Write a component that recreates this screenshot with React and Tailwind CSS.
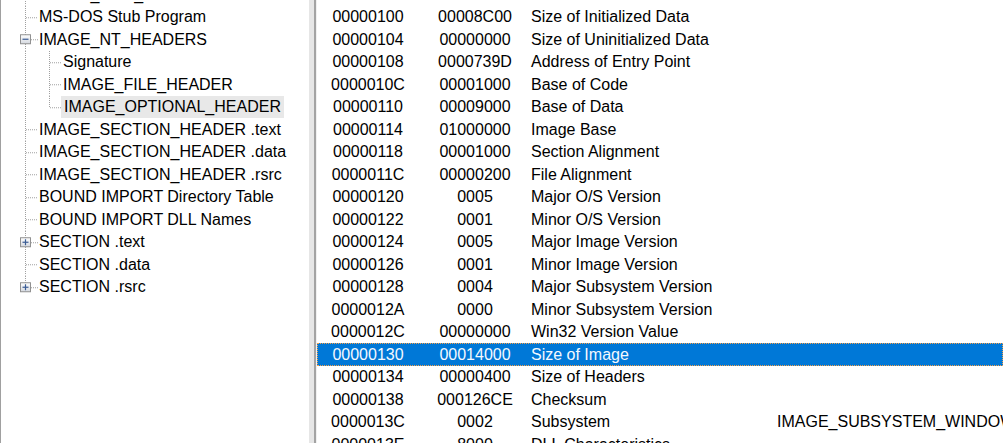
import React from "react";

const FONT = { fontFamily: '"Liberation Sans", Arial, sans-serif' };

const tree = [
  { label: "IMAGE_DOS_HEADER", level: 0 },
  { label: "MS-DOS Stub Program", level: 0 },
  { label: "IMAGE_NT_HEADERS", level: 0, box: "minus" },
  { label: "Signature", level: 1 },
  { label: "IMAGE_FILE_HEADER", level: 1 },
  { label: "IMAGE_OPTIONAL_HEADER", level: 1, selected: true, lastChild: true },
  { label: "IMAGE_SECTION_HEADER .text", level: 0 },
  { label: "IMAGE_SECTION_HEADER .data", level: 0 },
  { label: "IMAGE_SECTION_HEADER .rsrc", level: 0 },
  { label: "BOUND IMPORT Directory Table", level: 0 },
  { label: "BOUND IMPORT DLL Names", level: 0 },
  { label: "SECTION .text", level: 0, box: "plus" },
  { label: "SECTION .data", level: 0 },
  { label: "SECTION .rsrc", level: 0, box: "plus", last: true },
];

const rows = [
  ["000000FC", "00006800", "Size of Code", ""],
  ["00000100", "00008C00", "Size of Initialized Data", ""],
  ["00000104", "00000000", "Size of Uninitialized Data", ""],
  ["00000108", "0000739D", "Address of Entry Point", ""],
  ["0000010C", "00001000", "Base of Code", ""],
  ["00000110", "00009000", "Base of Data", ""],
  ["00000114", "01000000", "Image Base", ""],
  ["00000118", "00001000", "Section Alignment", ""],
  ["0000011C", "00000200", "File Alignment", ""],
  ["00000120", "0005", "Major O/S Version", ""],
  ["00000122", "0001", "Minor O/S Version", ""],
  ["00000124", "0005", "Major Image Version", ""],
  ["00000126", "0001", "Minor Image Version", ""],
  ["00000128", "0004", "Major Subsystem Version", ""],
  ["0000012A", "0000", "Minor Subsystem Version", ""],
  ["0000012C", "00000000", "Win32 Version Value", ""],
  ["00000130", "00014000", "Size of Image", "", true],
  ["00000134", "00000400", "Size of Headers", ""],
  ["00000138", "000126CE", "Checksum", ""],
  ["0000013C", "0002", "Subsystem", "IMAGE_SUBSYSTEM_WINDOWS_GUI"],
  ["0000013E", "8000", "DLL Characteristics", ""],
];

const LINE = "#a0a0a0";
const H = 22.5;
const C = 11.25;

function Box({ type }) {
  return (
    <g>
      <defs>
        <linearGradient id={"g" + type} x1="0" y1="0" x2="0" y2="1">
          <stop offset="0" stopColor="#ffffff" />
          <stop offset="1" stopColor="#d4d8df" />
        </linearGradient>
      </defs>
      <rect x="20.5" y={C - 4.5} width="10" height="9" fill={"url(#g" + type + ")"} stroke="#919191" strokeWidth="1" />
      <line x1="22.5" y1={C} x2="28.5" y2={C} stroke="#3b5d94" strokeWidth="1.2" />
      {type === "plus" && <line x1="25.5" y1={C - 3} x2="25.5" y2={C + 3} stroke="#3b5d94" strokeWidth="1.2" />}
    </g>
  );
}

function Gutter({ item }) {
  const w = item.level === 0 ? 39 : 63;
  const dash = "1 1";
  return (
    <svg width={w} height={H} className="shrink-0 block">
      <line x1="25.5" y1="0" x2="25.5" y2={item.last ? C : H} stroke={LINE} strokeDasharray={dash} />
      {item.level === 0 && (
        <line x1={item.box ? 31 : 26} y1={C + 0.5} x2="38" y2={C + 0.5} stroke={LINE} strokeDasharray={dash} />
      )}
      {item.level === 1 && (
        <>
          <line x1="49.5" y1="0" x2="49.5" y2={item.lastChild ? C : H} stroke={LINE} strokeDasharray={dash} />
          <line x1="50" y1={C + 0.5} x2="62" y2={C + 0.5} stroke={LINE} strokeDasharray={dash} />
        </>
      )}
      {item.box && <Box type={item.box} />}
    </svg>
  );
}

function TreePane() {
  return (
    <div className="w-[309px] h-full shrink-0 bg-white border-l border-[#a0a0a0] overflow-hidden">
      <div className="mt-[-16.75px] ml-[-1px]">
        {tree.map((item, i) => (
          <div key={i} className="flex items-center h-[22.5px]">
            <Gutter item={item} />
            <span
              className={
                "text-[16px] leading-[20px] whitespace-nowrap text-black " +
                (item.selected ? "bg-[#e8e8e8] px-[3px] ml-[-2px] py-[1px]" : "")
              }
            >
              {item.label}
            </span>
          </div>
        ))}
      </div>
    </div>
  );
}

function ListPane() {
  return (
    <div className="flex-1 h-full bg-white overflow-hidden">
      <div className="mt-[-16.75px]">
        {rows.map((r, i) => {
          const sel = r[4];
          return (
            <div
              key={i}
              className={
                "flex items-center h-[22.5px] text-[16px] whitespace-nowrap " +
                (sel
                  ? "bg-[#0078d7] text-[#f4f9ff] outline-1 outline-dotted outline-[#f5a04a] -outline-offset-1"
                  : "text-black")
              }
            >
              <div className="w-[102px] shrink-0 text-center">{r[0]}</div>
              <div className="w-[112px] shrink-0 text-center">{r[1]}</div>
              <div className="w-[246px] shrink-0">{r[2]}</div>
              <div className="shrink-0">{r[3]}</div>
            </div>
          );
        })}
      </div>
    </div>
  );
}

export default function App() {
  return (
    <div className="w-[1003px] h-[443px] overflow-hidden bg-white flex" style={FONT}>
      <TreePane />
      <div className="w-[8px] h-full shrink-0 flex">
        <div className="w-[5px] h-full bg-[#e6e6e6]" />
        <div className="w-[2px] h-full bg-[#a3a3a3]" />
        <div className="w-[1px] h-full bg-[#f0f0f0]" />
      </div>
      <ListPane />
    </div>
  );
}
